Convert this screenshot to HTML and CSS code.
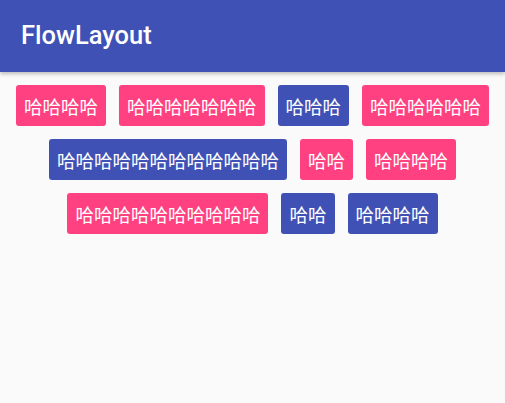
FILE: index.html
```html
<!DOCTYPE html>
<html lang="zh">
<head>
<meta charset="utf-8">
<title>FlowLayout</title>
<link rel="stylesheet" href="styles.css">
</head>
<body>
<header class="appbar"><h1 class="title">FlowLayout</h1></header>
<main class="flow">
  <div class="row">
    <span class="tag pink">哈哈哈哈</span>
    <span class="tag pink">哈哈哈哈哈哈哈</span>
    <span class="tag blue">哈哈哈</span>
    <span class="tag pink">哈哈哈哈哈哈</span>
  </div>
  <div class="row">
    <span class="tag blue">哈哈哈哈哈哈哈哈哈哈哈哈</span>
    <span class="tag pink">哈哈</span>
    <span class="tag pink">哈哈哈哈</span>
  </div>
  <div class="row">
    <span class="tag pink">哈哈哈哈哈哈哈哈哈哈</span>
    <span class="tag blue">哈哈</span>
    <span class="tag blue">哈哈哈哈</span>
  </div>
</main>
</body>
</html>
```
FILE: styles.css
```css
html, body {
  margin: 0;
  padding: 0;
  background: #fafafa;
  width: 505px;
  height: 403px;
  overflow: hidden;
}
.appbar {
  height: 72px;
  background: #3f51b5;
  box-shadow: 0 2px 4px rgba(0,0,0,0.25);
  display: flex;
  align-items: center;
  padding-left: 21px;
  position: relative;
  z-index: 1;
}
.title {
  margin: 0;
  color: #fff;
  font-family: Roboto, "Liberation Sans", sans-serif;
  font-weight: 500;
  font-size: 25.5px;
  line-height: 1;
  padding-top: 0;
}
.flow {
  padding-top: 13px;
  display: flex;
  flex-direction: column;
  gap: 13px;
}
.row {
  display: flex;
  justify-content: center;
  gap: 13px;
}
.tag {
  height: 41px;
  padding: 0 8px;
  border-radius: 3px;
  display: flex;
  align-items: center;
  color: #fff;
  font-family: "Noto Sans CJK SC", sans-serif;
  font-size: 18.5px;
  line-height: 1;
  padding-top: 2px;
  box-sizing: border-box;
}
.pink { background: #ff4081; }
.blue { background: #3f51b5; }
```
